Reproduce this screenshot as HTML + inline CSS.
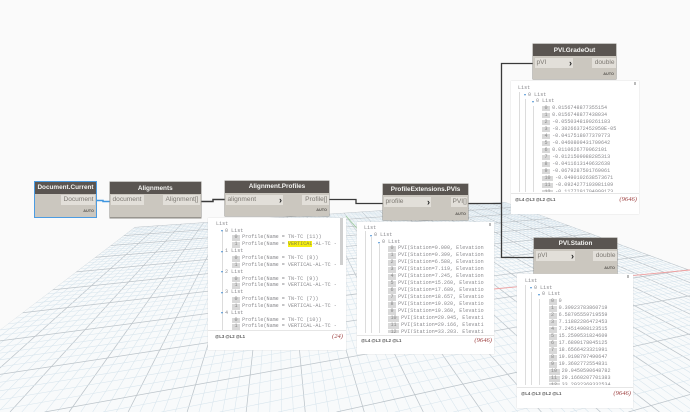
<!DOCTYPE html>
<html>
<head>
<meta charset="utf-8">
<style>
html,body{margin:0;padding:0;background:#fafafa;width:690px;height:412px;overflow:hidden}
#s{position:relative;width:690px;height:412px;overflow:hidden;background:#fafafa;font-family:"Liberation Sans",sans-serif}
svg{position:absolute;left:0;top:0}
.n{position:absolute;background:#cbc7bf;box-shadow:0 0 0 .5px #8f8c86;box-sizing:border-box}
.n.sel{box-shadow:0 0 0 1px #4c9ce2}
.h{position:absolute;left:0;right:0;top:0;background:#5a5551;color:#f4f4f2;font-weight:bold;font-size:6.4px;text-align:center;white-space:nowrap}
.p{position:absolute;background:#e2dfd9;color:#7d7973;font-size:6.6px;line-height:10px;height:10px;white-space:nowrap;padding:0 1.5px;box-sizing:border-box}
.p.rt{text-align:right}
.p b{position:absolute;right:1px;top:-.5px;color:#222;font-size:9px}
.a{position:absolute;font-size:3.8px;color:#55524d;font-weight:bold;line-height:5px}
.w{position:absolute;background:#fff;box-shadow:0 0 1px #ccc;overflow:hidden}
.w .c{position:absolute;overflow:hidden;font-family:"Liberation Mono",monospace;font-size:5.1px;line-height:7px;color:#8a8a8e;white-space:pre}
.w .r{position:absolute;height:7px;line-height:7px}
.w i{font-style:normal;display:inline-block;background:#d9d9d9;height:5.5px;line-height:5.5px;padding:0 2.5px;margin-right:2px;color:#888}
.w u{position:absolute;width:1px;background:#dcdcdc}
.w s{position:absolute;width:0;height:0;border-left:1.7px solid transparent;border-right:1.7px solid transparent;border-top:2.4px solid #4a8fd0}
.f{position:absolute;left:0;right:0;height:1px;background:#e6e6e6}
.t{position:absolute;font-family:"Liberation Sans",sans-serif;font-size:4.3px;line-height:6px;color:#555;white-space:nowrap;font-weight:bold}
.q{position:absolute;font-family:"Liberation Serif",serif;font-style:italic;font-size:6.6px;line-height:8px;color:#a04646;white-space:nowrap}
.x{position:absolute;width:2px;height:3px;background:#bbb}
</style>
</head>
<body>
<div id="s">
<svg id="g" width="690" height="412" viewBox="0 0 690 412" style="overflow:hidden">
<defs><clipPath id="cp"><polygon points="135,227 505,202 690,270 690,412 0,412 0,330"/></clipPath></defs>
<polygon points="135,227 505,202 690,270 690,412 0,412 0,330" fill="#f8fafb"/>
<g id="gl" clip-path="url(#cp)"></g>
<line x1="494" y1="289" x2="690" y2="270" stroke="#f0a0a0" stroke-width=".9"/>
<line x1="346" y1="216" x2="362" y2="234" stroke="#9ccc9c" stroke-width=".8"/>
</svg>
<script>
(function(){
var g=document.getElementById('gl'),h='';
function ln(a,b,c,d,col,w){h+='<line x1="'+a+'" y1="'+b+'" x2="'+c+'" y2="'+d+'" stroke="'+col+'" stroke-width="'+w+'"/>';}
var i,x,t,M='#bcc4ca',m='#d8e5ed';
for(i=0;i<=100;i++){
  x=39+7.31*i;
  var k=(412-118)/(300-118);
  var maj=i%5==0;
  ln(278,118,278+(x-278)*k,412,maj?M:m,maj?.75:.55);
}
for(i=0;i<=60;i++){
  t=12868-178*i;
  if(t<1500)break;
  var maj2=i%5==0;
  var sl=875/t;
  var y0=125+sl*1638,y1=125+sl*948,x0=0;
  if(y1>=412)break;
  if(y0>412){x0=1638-(287/sl);y0=412;}
  ln(690,y1,x0,y0,maj2?M:m,maj2?.75:.55);
}
g.innerHTML=h;
})();
</script>

<svg width="690" height="412" viewBox="0 0 690 412" fill="none">
<path d="M96 200.5H103V201.5H110" stroke="#3f96e0" stroke-width="1.5"/>
<path d="M201 201.5H213V199.5H225" stroke="#3a3a3a" stroke-width="1.5"/>
<path d="M329 199.5H356V203.5H383" stroke="#3a3a3a" stroke-width="1.3"/>
<path d="M468 203.5H501.5M533 63.5H501.5V257.5H534" stroke="#3a3a3a" stroke-width="1.3"/>
</svg>

<!-- Document.Current -->
<div class="n sel" style="left:35px;top:182px;width:61px;height:35px">
<div class="h" style="height:12px;line-height:12px">Document.Current</div>
<div class="p rt" style="left:26px;top:13px;width:34px">Document</div>
<div class="a" style="right:2px;top:27px">AUTO</div>
</div>

<!-- Alignments -->
<div class="n" style="left:110px;top:182px;width:90.5px;height:36px;border-bottom:1px solid #98958f">
<div class="h" style="height:12px;line-height:13px">Alignments</div>
<div class="p" style="left:1px;top:13px;width:33px">document</div>
<div class="p rt" style="left:53px;top:13px;width:37px">Alignment[]</div>
</div>

<!-- Alignment.Profiles -->
<div class="n" style="left:225px;top:181px;width:104px;height:35px">
<div class="h" style="height:12px;line-height:12px">Alignment.Profiles</div>
<div class="p" style="left:1px;top:14px;width:57px">alignment<b>&#8250;</b></div>
<div class="p rt" style="left:77px;top:14px;width:27px">Profile[]</div>
<div class="a" style="right:2px;top:27px">AUTO</div>
</div>

<!-- Profiles watch -->
<div class="w" style="left:208px;top:218px;width:138px;height:132px">
<div class="c" style="left:0;top:0;width:131px;height:112px">
<u style="left:14px;top:13px;height:99px"></u>
<div class="r" style="left:8px;top:3px">List</div>
<s style="left:12.5px;top:12px"></s><div class="r" style="left:17px;top:9.5px">0 List</div>
<div class="r" style="left:24px;top:16px"><i>0</i>Profile(Name = TN-TC (11))</div>
<div class="r" style="left:24px;top:23px"><i>1</i>Profile(Name = <span style="background:#f5ee10;color:#8a8a40">VERTICAL</span>-AL-TC -</div>
<s style="left:12.5px;top:32.5px"></s><div class="r" style="left:17px;top:30px">1 List</div>
<div class="r" style="left:24px;top:37px"><i>0</i>Profile(Name = TN-TC (8))</div>
<div class="r" style="left:24px;top:43.5px"><i>1</i>Profile(Name = VERTICAL-AL-TC -</div>
<s style="left:12.5px;top:53px"></s><div class="r" style="left:17px;top:50.5px">2 List</div>
<div class="r" style="left:24px;top:57.5px"><i>0</i>Profile(Name = TN-TC (9))</div>
<div class="r" style="left:24px;top:64px"><i>1</i>Profile(Name = VERTICAL-AL-TC -</div>
<s style="left:12.5px;top:73.5px"></s><div class="r" style="left:17px;top:71px">3 List</div>
<div class="r" style="left:24px;top:78px"><i>0</i>Profile(Name = TN-TC (7))</div>
<div class="r" style="left:24px;top:85px"><i>1</i>Profile(Name = VERTICAL-AL-TC -</div>
<s style="left:12.5px;top:94px"></s><div class="r" style="left:17px;top:91.5px">4 List</div>
<div class="r" style="left:24px;top:98.5px"><i>0</i>Profile(Name = TN-TC (10))</div>
<div class="r" style="left:24px;top:105px"><i>1</i>Profile(Name = VERTICAL-AL-TC -</div>
</div>
<div style="position:absolute;left:132px;top:0;width:3px;height:47px;background:#cfcfcf"></div>
<div class="f" style="top:112px"></div>
<div class="t" style="left:7px;top:116px">@L3 @L2 @L1</div>
<div class="q" style="right:3px;top:115px">(24)</div>
</div>

<!-- ProfileExtensions.PVIs -->
<div class="n" style="left:383px;top:184px;width:85px;height:35.5px">
<div class="h" style="height:11px;line-height:12px">ProfileExtensions.PVIs</div>
<div class="p" style="left:1px;top:13px;width:47px">profile<b>&#8250;</b></div>
<div class="p rt" style="left:68px;top:13px;width:16px">PVI[]</div>
<div class="a" style="right:2px;top:28px">AUTO</div>
</div>

<!-- PVIs watch -->
<div class="w" style="left:357px;top:222px;width:137px;height:132px">
<div class="c" style="left:0;top:0;width:127px;height:111px">
<u style="left:8px;top:9px;height:102px"></u><u style="left:14px;top:15px;height:96px"></u><u style="left:22px;top:22px;height:89px"></u>
<div class="r" style="left:7px;top:3px">List</div>
<s style="left:12.5px;top:12.5px"></s><div class="r" style="left:17px;top:10px">0 List</div>
<s style="left:20.5px;top:19.5px"></s><div class="r" style="left:25px;top:17px">0 List</div>
<div class="r" style="left:31px;top:23px"><i>0</i>PVI(Station=0.000, Elevation</div>
<div class="r" style="left:31px;top:30px"><i>1</i>PVI(Station=0.399, Elevation</div>
<div class="r" style="left:31px;top:37px"><i>2</i>PVI(Station=6.588, Elevation</div>
<div class="r" style="left:31px;top:44px"><i>3</i>PVI(Station=7.119, Elevation</div>
<div class="r" style="left:31px;top:51px"><i>4</i>PVI(Station=7.245, Elevation</div>
<div class="r" style="left:31px;top:58px"><i>5</i>PVI(Station=15.260, Elevatio</div>
<div class="r" style="left:31px;top:65px"><i>6</i>PVI(Station=17.689, Elevatio</div>
<div class="r" style="left:31px;top:72px"><i>7</i>PVI(Station=18.657, Elevatio</div>
<div class="r" style="left:31px;top:79px"><i>8</i>PVI(Station=19.020, Elevatio</div>
<div class="r" style="left:31px;top:86px"><i>9</i>PVI(Station=19.360, Elevatio</div>
<div class="r" style="left:31px;top:93px"><i>10</i>PVI(Station=20.945, Elevati</div>
<div class="r" style="left:31px;top:100px"><i>11</i>PVI(Station=29.166, Elevati</div>
<div class="r" style="left:31px;top:107px;height:4px;overflow:hidden"><i>12</i>PVI(Station=33.203, Elevati</div>
</div>
<div class="x" style="left:132px;top:1px"></div>
<div class="f" style="top:113px"></div>
<div class="t" style="left:4px;top:116px">@L4 @L3 @L2 @L1</div>
<div class="q" style="right:2px;top:115px">(9646)</div>
</div>

<!-- PVI.GradeOut -->
<div class="n" style="left:533px;top:44px;width:83px;height:35px">
<div class="h" style="height:12px;line-height:13px">PVI.GradeOut</div>
<div class="p" style="left:2px;top:14px;width:38px;height:10px">pVI<b>&#8250;</b></div>
<div class="p rt" style="left:59px;top:14px;width:24px">double</div>
<div class="a" style="right:2px;top:28px">AUTO</div>
</div>

<!-- GradeOut watch -->
<div class="w" style="left:511px;top:81px;width:128px;height:133px">
<div class="c" style="left:0;top:0;width:120px;height:111px">
<u style="left:8px;top:11px;height:100px"></u><u style="left:14px;top:18px;height:93px"></u><u style="left:22px;top:25px;height:86px"></u>
<div class="r" style="left:7px;top:4px">List</div>
<s style="left:12.5px;top:13px"></s><div class="r" style="left:17px;top:10.5px">0 List</div>
<s style="left:20.5px;top:19.5px"></s><div class="r" style="left:25px;top:17px">0 List</div>
<div class="r" style="left:31px;top:23.5px"><i>0</i>0.0156748877355154</div>
<div class="r" style="left:31px;top:30.5px"><i>1</i>0.0156748877438034</div>
<div class="r" style="left:31px;top:37.5px"><i>2</i>-0.0550348190261183</div>
<div class="r" style="left:31px;top:44.5px"><i>3</i>-8.38266372452950E-05</div>
<div class="r" style="left:31px;top:51.5px"><i>4</i>-0.0417518077379773</div>
<div class="r" style="left:31px;top:58.5px"><i>5</i>-0.0460809431709642</div>
<div class="r" style="left:31px;top:65.5px"><i>6</i>0.0110626770062101</div>
<div class="r" style="left:31px;top:72.5px"><i>7</i>-0.0121509088285313</div>
<div class="r" style="left:31px;top:79.5px"><i>8</i>-0.0411613140632638</div>
<div class="r" style="left:31px;top:86.5px"><i>9</i>-0.0679287501769061</div>
<div class="r" style="left:31px;top:93.5px"><i>10</i>-0.0490102638573671</div>
<div class="r" style="left:31px;top:100.5px"><i>11</i>-0.0924277103981109</div>
<div class="r" style="left:31px;top:107.5px;height:3.5px;overflow:hidden"><i>12</i>-0.1177291704999173</div>
</div>
<div class="x" style="left:123px;top:1px"></div>
<div class="f" style="top:112px"></div>
<div class="t" style="left:4px;top:116px">@L4 @L3 @L2 @L1</div>
<div class="q" style="right:2px;top:115px">(9646)</div>
</div>

<!-- PVI.Station -->
<div class="n" style="left:534px;top:238px;width:83px;height:35.5px">
<div class="h" style="height:11px;line-height:12px">PVI.Station</div>
<div class="p" style="left:2px;top:13px;width:39px">pVI<b>&#8250;</b></div>
<div class="p rt" style="left:59px;top:13px;width:24px">double</div>
<div class="a" style="right:2px;top:28px">AUTO</div>
</div>

<!-- Station watch -->
<div class="w" style="left:517px;top:274px;width:116px;height:134px">
<div class="c" style="left:0;top:0;width:108px;height:111px">
<u style="left:8px;top:11px;height:100px"></u><u style="left:14px;top:18px;height:93px"></u><u style="left:22px;top:25px;height:86px"></u>
<div class="r" style="left:8px;top:4px">List</div>
<s style="left:13px;top:13px"></s><div class="r" style="left:17px;top:10.5px">0 List</div>
<s style="left:21px;top:19.5px"></s><div class="r" style="left:25px;top:17px">0 List</div>
<div class="r" style="left:31.5px;top:24px"><i>0</i>0</div>
<div class="r" style="left:31.5px;top:31px"><i>1</i>0.39923783860719</div>
<div class="r" style="left:31.5px;top:38px"><i>2</i>6.58795559719559</div>
<div class="r" style="left:31.5px;top:45px"><i>3</i>7.11882286472453</div>
<div class="r" style="left:31.5px;top:52px"><i>4</i>7.24514908123515</div>
<div class="r" style="left:31.5px;top:59px"><i>5</i>15.2599531824609</div>
<div class="r" style="left:31.5px;top:66px"><i>6</i>17.6890178045125</div>
<div class="r" style="left:31.5px;top:73px"><i>7</i>18.6566423321991</div>
<div class="r" style="left:31.5px;top:80px"><i>8</i>19.0198797490647</div>
<div class="r" style="left:31.5px;top:87px"><i>9</i>19.3602772554831</div>
<div class="r" style="left:31.5px;top:94px"><i>10</i>20.9450590648782</div>
<div class="r" style="left:31.5px;top:101px"><i>11</i>29.1660207701383</div>
<div class="r" style="left:31.5px;top:108px;height:3px;overflow:hidden"><i>12</i>33.2032369332534</div>
</div>
<div class="x" style="left:110px;top:1px"></div>
<div class="f" style="top:113px"></div>
<div class="t" style="left:4px;top:117px">@L4 @L3 @L2 @L1</div>
<div class="q" style="right:2px;top:116px">(9646)</div>
</div>
</div>
</body>
</html>
